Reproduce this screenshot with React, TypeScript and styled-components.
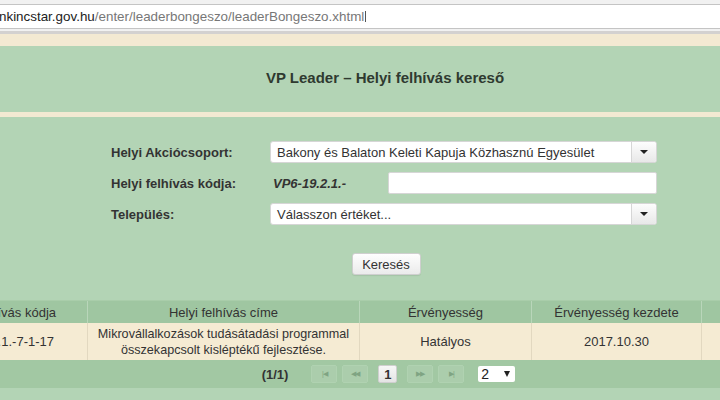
import React from "react";
import styled, { createGlobalStyle } from "styled-components";

const Global = createGlobalStyle`
  html, body { margin: 0; padding: 0; }
  body {
    font-family: "Liberation Sans", Arial, sans-serif;
    background: #b3d4b5;
    color: #333;
  }
`;

const Page = styled.div`
  width: 720px;
  height: 400px;
  overflow: hidden;
  display: flex;
  flex-direction: column;
  background: #b3d4b5;
`;

const AddressBar = styled.div`
  height: 34px;
  box-sizing: border-box;
  background: #f1f1f1;
  padding-top: 4px;
  border-bottom: 3px solid #d3d1d0;
`;

const UrlBox = styled.div`
  height: 25px;
  box-sizing: border-box;
  background: #fff;
  border-top: 1px solid #c4c4c4;
  border-bottom: 1px solid #c4c4c4;
  display: flex;
  align-items: center;
  font-family: "Liberation Sans", Arial, sans-serif;
  font-size: 13.4px;
  white-space: nowrap;
  overflow: hidden;
  margin-left: -1px;
`;

const Host = styled.span`
  color: #222;
`;

const Path = styled.span`
  color: #777;
`;

const Caret = styled.span`
  display: inline-block;
  width: 1px;
  height: 11px;
  background: #555;
  margin-left: 1px;
`;

const BeigeStrip = styled.div<{ $h: number }>`
  height: ${(p) => p.$h}px;
  background: #f3e9d2;
  flex-shrink: 0;
`;

const Header = styled.div`
  height: 66px;
  display: flex;
  align-items: center;
  justify-content: center;
  padding-left: 50px;
  padding-bottom: 4px;
  box-sizing: border-box;
`;

const Title = styled.h1`
  margin: 0;
  font-size: 15px;
  font-weight: bold;
  color: #2f3a30;
`;

const Form = styled.div`
  display: grid;
  grid-template-columns: 159px 387px;
  grid-auto-rows: 22px;
  row-gap: 9px;
  margin: 24px 0 0 111px;
  align-items: center;
`;

const Label = styled.div`
  font-size: 13px;
  font-weight: bold;
  color: #333;
`;

const Select = styled.div`
  height: 22px;
  box-sizing: border-box;
  width: 100%;
  background: #fff;
  border: 1px solid #d6d6d6;
  border-radius: 3px;
  display: flex;
  align-items: center;
  font-size: 13px;
  color: #333;
  overflow: hidden;
`;

const SelectText = styled.div`
  flex: 1;
  padding-left: 6px;
  white-space: nowrap;
`;

const SelectTrigger = styled.div`
  width: 24px;
  height: 100%;
  border-left: 1px solid #d6d6d6;
  background: linear-gradient(#fdfdfd, #e8e8e8);
  display: flex;
  align-items: center;
  justify-content: center;
`;

const Triangle = styled.div`
  width: 0;
  height: 0;
  border-left: 4px solid transparent;
  border-right: 4px solid transparent;
  border-top: 4px solid #222;
`;

const CodeRow = styled.div`
  display: flex;
  align-items: center;
  height: 22px;
`;

const CodePrefix = styled.div`
  font-size: 13px;
  font-weight: bold;
  font-style: italic;
  color: #333;
  width: 115px;
  padding-left: 3px;
`;

const TextInput = styled.div`
  width: 269px;
  height: 22px;
  box-sizing: border-box;
  background: #fff;
  border: 1px solid #d6d6d6;
  border-radius: 2px;
`;

const ButtonRow = styled.div`
  display: flex;
  justify-content: center;
  padding-left: 52px;
  margin-top: 28px;
`;

const Button = styled.button`
  width: 69px;
  height: 22px;
  box-sizing: border-box;
  border: 1px solid #cfcfcf;
  border-radius: 3px;
  background: linear-gradient(#fefefe, #ebebeb);
  font-family: "Liberation Sans", Arial, sans-serif;
  font-size: 13px;
  color: #333;
  padding: 0;
  box-shadow: 0 1px 1px rgba(0, 0, 0, 0.08);
`;

const Table = styled.div`
  margin-top: 25px;
  border-top: 1px solid #a9cdaa;
  display: grid;
  grid-template-columns: 88px 272px 172px 170px 1fr;
`;

const HeadCell = styled.div<{ $clip?: boolean; $last?: boolean }>`
  height: 22px;
  background: #9fc6a1;
  border-right: ${(p) => (p.$last ? "none" : "1px solid #b9d6ba")};
  display: flex;
  align-items: center;
  justify-content: ${(p) => (p.$clip ? "flex-end" : "center")};
  padding-right: ${(p) => (p.$clip ? "31px" : "0")};
  overflow: hidden;
  white-space: nowrap;
  font-size: 13px;
  color: #333;
`;

const DataCell = styled.div<{ $clip?: boolean; $last?: boolean }>`
  height: 37px;
  background: #f5ebd3;
  border-right: ${(p) => (p.$last ? "none" : "1px solid #e2d8c0")};
  display: flex;
  align-items: center;
  justify-content: ${(p) => (p.$clip ? "flex-end" : "center")};
  padding-right: ${(p) => (p.$clip ? "33px" : "0")};
  overflow: hidden;
  white-space: nowrap;
  font-size: 13px;
  color: #333;
  text-align: center;
  line-height: 16px;
`;

const Wrap = styled.span`
  white-space: normal;
  font-size: 12.6px;
`;

const Paginator = styled.div`
  height: 28px;
  background: #a2c8a3;
  display: flex;
  align-items: center;
  justify-content: center;
  padding-left: 57px;
  gap: 5px;
`;

const PageInfo = styled.div`
  font-size: 13px;
  font-weight: bold;
  color: #333;
  margin-right: 18px;
`;

const NavBtn = styled.div`
  width: 26px;
  height: 18px;
  box-sizing: border-box;
  border: 1px solid #b0d2b1;
  border-radius: 2px;
  background: #abcdac;
  display: flex;
  align-items: center;
  justify-content: center;
  font-size: 7px;
  letter-spacing: -1px;
  color: #7fa483;
`;

const PageNum = styled.div`
  width: 19px;
  height: 18px;
  box-sizing: border-box;
  border: 1px solid #cfcfcf;
  border-radius: 2px;
  background: linear-gradient(#f7f7f7, #e4e4e4);
  display: flex;
  align-items: center;
  justify-content: center;
  font-size: 13px;
  font-weight: bold;
  color: #333;
  margin: 0 5px;
`;

const RowsSelect = styled.div`
  width: 37px;
  height: 16px;
  box-sizing: border-box;
  background: #fff;
  border-radius: 2px;
  margin-left: 9px;
  display: flex;
  align-items: center;
  justify-content: space-between;
  padding: 0 5px 0 3px;
  font-size: 14px;
  color: #222;
`;

const SmallTri = styled.div`
  width: 0;
  height: 0;
  border-left: 3px solid transparent;
  border-right: 3px solid transparent;
  border-top: 6px solid #222;
`;

export default function App() {
  return (
    <Page>
      <Global />
      <AddressBar>
        <UrlBox>
          <Host>nkincstar.gov.hu</Host>
          <Path>/enter/leaderbongeszo/leaderBongeszo.xhtml</Path>
          <Caret />
        </UrlBox>
      </AddressBar>
      <BeigeStrip $h={12} />
      <Header>
        <Title>VP Leader – Helyi felhívás kereső</Title>
      </Header>
      <BeigeStrip $h={5} />
      <Form>
        <Label>Helyi Akciócsoport:</Label>
        <Select>
          <SelectText>Bakony és Balaton Keleti Kapuja Közhasznú Egyesület</SelectText>
          <SelectTrigger>
            <Triangle />
          </SelectTrigger>
        </Select>
        <Label>Helyi felhívás kódja:</Label>
        <CodeRow>
          <CodePrefix>VP6-19.2.1.-</CodePrefix>
          <TextInput />
        </CodeRow>
        <Label>Település:</Label>
        <Select>
          <SelectText>Válasszon értéket...</SelectText>
          <SelectTrigger>
            <Triangle />
          </SelectTrigger>
        </Select>
      </Form>
      <ButtonRow>
        <Button>Keresés</Button>
      </ButtonRow>
      <Table>
        <HeadCell $clip>Helyi felhívás kódja</HeadCell>
        <HeadCell>Helyi felhívás címe</HeadCell>
        <HeadCell>Érvényesség</HeadCell>
        <HeadCell>Érvényesség kezdete</HeadCell>
        <HeadCell $last />
        <DataCell $clip>VP6-19.2.1.-7-1-17</DataCell>
        <DataCell>
          <Wrap>
            Mikrovállalkozások tudásátadási programmal
            <br />
            összekapcsolt kisléptékű fejlesztése.
          </Wrap>
        </DataCell>
        <DataCell>Hatályos</DataCell>
        <DataCell>2017.10.30</DataCell>
        <DataCell $last />
      </Table>
      <Paginator>
        <PageInfo>(1/1)</PageInfo>
        <NavBtn>|◀</NavBtn>
        <NavBtn>◀◀</NavBtn>
        <PageNum>1</PageNum>
        <NavBtn>▶▶</NavBtn>
        <NavBtn>▶|</NavBtn>
        <RowsSelect>
          2<SmallTri />
        </RowsSelect>
      </Paginator>
    </Page>
  );
}
